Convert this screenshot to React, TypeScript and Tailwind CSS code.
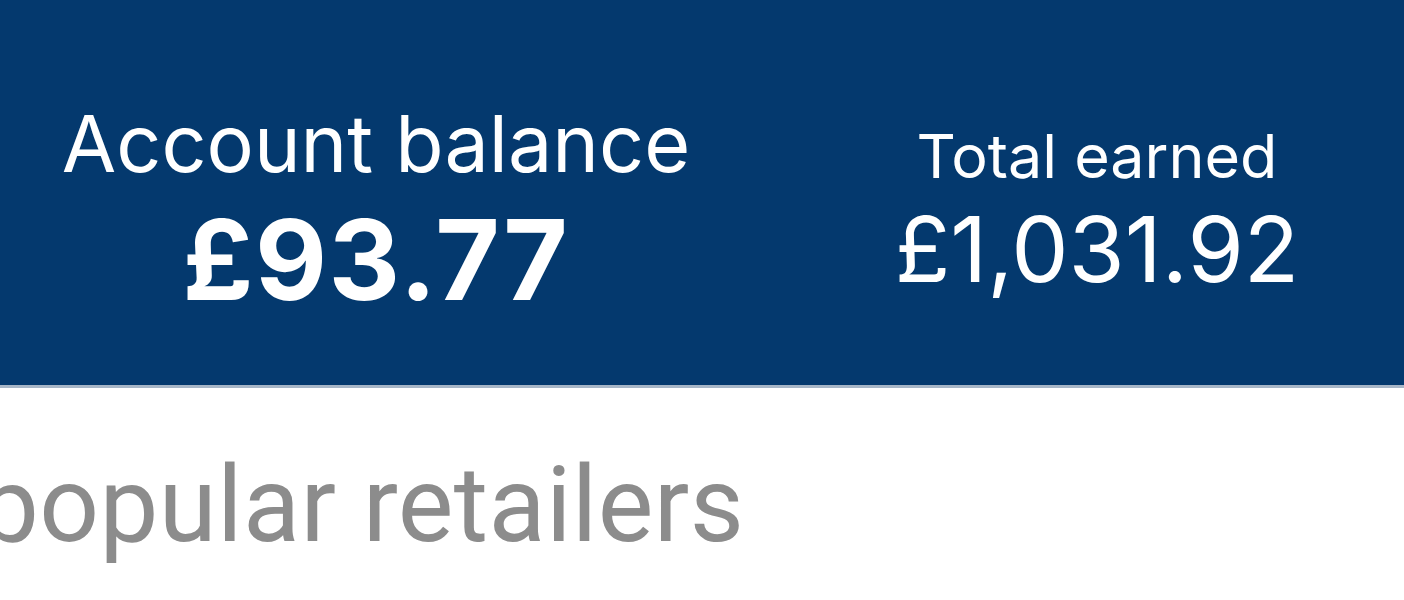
import React from "react";

export default function App() {
  return (
    <div className="w-[1404px] h-[600px] bg-white overflow-hidden" style={{ fontFamily: "Inter, 'Noto Sans', sans-serif" }}>
      <div className="h-[388px] bg-[#04396e] border-b-[3px] border-[#a7b6c7] flex gap-[38px] pt-[98px]">
        <div className="w-[752px] flex flex-col items-center text-white">
          <div className="text-[79px] leading-[90px] font-normal tracking-[0px]">Account balance</div>
          <div className="text-[111px] leading-[116px] font-bold mt-[14px] tracking-[1.5px]">£93.77</div>
        </div>
        <div className="flex-1 flex flex-col items-center text-white pt-[23px]">
          <div className="text-[61px] leading-[70px] font-normal">Total earned</div>
          <div className="text-[91px] leading-[96px] font-normal mt-[10px]">£1,031.92</div>
        </div>
      </div>
      <div className="pt-[58px] ml-[-20px] text-[105px] leading-[120px] tracking-[0.35px] text-[#8c8c8c]" style={{ fontFamily: "Roboto, sans-serif" }}>
        popular retailers
      </div>
    </div>
  );
}
